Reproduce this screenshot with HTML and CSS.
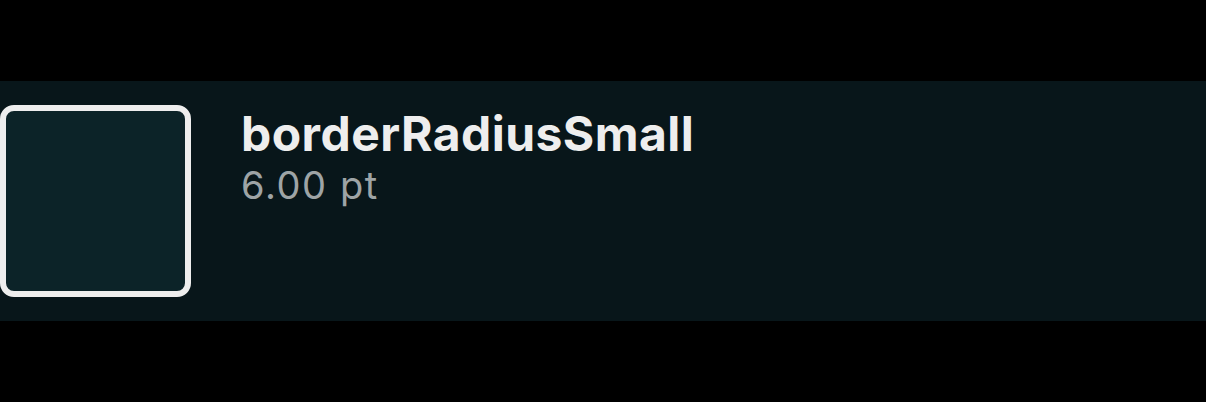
FILE: index.html
```html
<!DOCTYPE html>
<html>
<head>
<meta charset="utf-8">
<link rel="stylesheet" href="styles.css">
</head>
<body>
<div class="row">
  <div class="swatch"></div>
  <div class="info">
    <div class="name">borderRadiusSmall</div>
    <div class="value">6.00 pt</div>
  </div>
</div>
</body>
</html>
```
FILE: styles.css
```css
html, body {
  margin: 0;
  padding: 0;
  background: #000;
  height: 402px;
  overflow: hidden;
}
body {
  padding-top: 81px;
  box-sizing: border-box;
  font-family: Inter, "Noto Sans", sans-serif;
}
.row {
  height: 240px;
  background: #08161a;
  display: flex;
  align-items: flex-start;
  gap: 50px;
  padding-top: 24px;
  box-sizing: border-box;
}
.swatch {
  width: 191px;
  height: 192px;
  box-sizing: border-box;
  border: 6px solid #eeeeee;
  border-radius: 14px;
  background: #0c2328;
  flex: none;
}
.info {
  display: flex;
  flex-direction: column;
  padding-top: 1px;
}
.name {
  color: #eeeeee;
  font-weight: 700;
  font-size: 48px;
  line-height: 56px;
  letter-spacing: 0.45px;
}
.value {
  color: #9ea4a6;
  font-size: 38px;
  line-height: 47px;
  letter-spacing: 1.6px;
}
```
